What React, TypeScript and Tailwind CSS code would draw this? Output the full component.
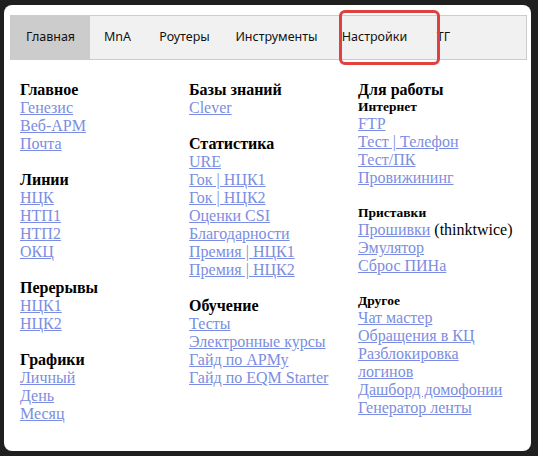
import React from "react";

type Item = { t: string; extra?: string };
type Group = { title: string; small?: boolean; items: Item[] };

const tabs = [
  { t: "Главная", w: "w-[79px]" },
  { t: "MnA", w: "w-[55px]" },
  { t: "Роутеры", w: "w-[79px]" },
  { t: "Инструменты", w: "w-[105px]" },
  { t: "Настройки", w: "w-[91px]" },
  { t: "ТГ", w: "w-[47px]" },
];

const col1: Group[] = [
  { title: "Главное", items: [{ t: "Генезис" }, { t: "Веб-АРМ" }, { t: "Почта" }] },
  { title: "Линии", items: [{ t: "НЦК" }, { t: "НТП1" }, { t: "НТП2" }, { t: "ОКЦ" }] },
  { title: "Перерывы", items: [{ t: "НЦК1" }, { t: "НЦК2" }] },
  { title: "Графики", items: [{ t: "Личный" }, { t: "День" }, { t: "Месяц" }] },
];

const col2: Group[] = [
  { title: "Базы знаний", items: [{ t: "Clever" }] },
  {
    title: "Статистика",
    items: [
      { t: "URE" },
      { t: "Гок | НЦК1" },
      { t: "Гок | НЦК2" },
      { t: "Оценки CSI" },
      { t: "Благодарности" },
      { t: "Премия | НЦК1" },
      { t: "Премия | НЦК2" },
    ],
  },
  {
    title: "Обучение",
    items: [{ t: "Тесты" }, { t: "Электронные курсы" }, { t: "Гайд по АРМу" }, { t: "Гайд по EQM Starter" }],
  },
];

const col3: Group[] = [
  {
    title: "Интернет",
    small: true,
    items: [{ t: "FTP" }, { t: "Тест | Телефон" }, { t: "Тест/ПК" }, { t: "Провижининг" }],
  },
  {
    title: "Приставки",
    small: true,
    items: [{ t: "Прошивки", extra: " (thinktwice)" }, { t: "Эмулятор" }, { t: "Сброс ПИНа" }],
  },
  {
    title: "Другое",
    small: true,
    items: [
      { t: "Чат мастер" },
      { t: "Обращения в КЦ" },
      { t: "Разблокировка логинов" },
      { t: "Дашборд домофонии" },
      { t: "Генератор ленты" },
    ],
  },
];

function Section({ g }: { g: Group }) {
  return (
    <div className="mb-[18px]">
      {g.small ? (
        <div className="text-[13.5px] font-bold leading-[16px]">{g.title}</div>
      ) : (
        <div className="font-bold">{g.title}</div>
      )}
      {g.items.map((it) => (
        <div key={it.t}>
          <a href="#" className="text-[#7b8de2] underline">
            {it.t}
          </a>
          {it.extra}
        </div>
      ))}
    </div>
  );
}

export default function App() {
  return (
    <div className="w-[538px] h-[456px] bg-[#1f1f1f] pl-[4px] pt-[5px] overflow-hidden">
      <div className="relative w-[527px] h-[446px] bg-white rounded-lg pl-[6px] pr-[4px] pt-[10px]">
        <div className="flex h-[45px] bg-[#f1f1f1] border border-[#cccccc] font-['Noto_Sans',sans-serif] text-[12.5px] text-[#111]">
          {tabs.map((tab, i) => (
            <div
              key={tab.t}
              className={
                "flex items-center justify-center " + tab.w + (i === 0 ? " bg-[#cccccc]" : "")
              }
            >
              {tab.t}
            </div>
          ))}
        </div>

        <div className="absolute left-[335px] top-[5px] w-[101px] h-[55px] border-[3px] border-[#e0403f] rounded-md" />

        <div className="grid grid-cols-[169px_169px_157px] pl-[10px] pt-[21px] font-['Liberation_Serif',serif] text-[16px] leading-[18px] text-black">
          <div>
            {col1.map((g) => (
              <Section key={g.title} g={g} />
            ))}
          </div>
          <div>
            {col2.map((g) => (
              <Section key={g.title} g={g} />
            ))}
          </div>
          <div>
            <div className="font-bold">Для работы</div>
            {col3.map((g) => (
              <Section key={g.title} g={g} />
            ))}
          </div>
        </div>
      </div>
    </div>
  );
}
